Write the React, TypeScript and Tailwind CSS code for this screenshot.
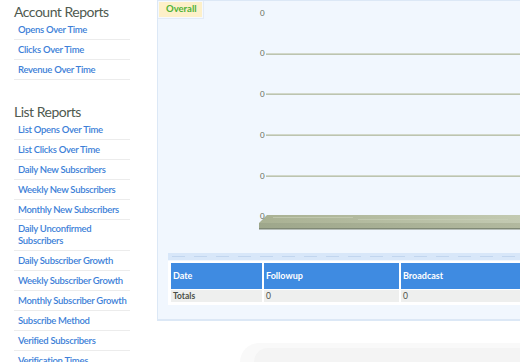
import React from "react";

const account = ["Opens Over Time", "Clicks Over Time", "Revenue Over Time"];
const list = [
  "List Opens Over Time",
  "List Clicks Over Time",
  "Daily New Subscribers",
  "Weekly New Subscribers",
  "Monthly New Subscribers",
  "Daily Unconfirmed Subscribers",
  "Daily Subscriber Growth",
  "Weekly Subscriber Growth",
  "Monthly Subscriber Growth",
  "Subscribe Method",
  "Verified Subscribers",
  "Verification Times",
];

function LinkItem({ label }: { label: string }) {
  const two = label === "Daily Unconfirmed Subscribers";
  return (
    <li
      className={
        two
          ? "border-b border-[#ececec] pl-[4px] pt-[3px] pb-[3px] text-[9.5px] font-semibold leading-[12px] tracking-[-0.3px] text-[#3d7fd8]"
          : "h-[20px] border-b border-[#ececec] pl-[4px] flex items-center text-[9.5px] font-semibold leading-[12px] tracking-[-0.3px] text-[#3d7fd8] whitespace-nowrap"
      }
    >
      {two ? (
        <a className="block">
          Daily Unconfirmed
          <br />
          Subscribers
        </a>
      ) : (
        <a>{label}</a>
      )}
    </li>
  );
}

function Chart() {
  const labels = [12, 52, 93, 134, 175, 215];
  const lines = [53, 93, 134, 175];
  return (
    <svg width="363" height="252" className="block">
      <defs>
        <linearGradient id="top" x1="0" x2="1" y1="0" y2="0">
          <stop offset="0" stopColor="#a9b193" />
          <stop offset="1" stopColor="#c3cab2" />
        </linearGradient>
        <linearGradient id="front" x1="0" x2="1" y1="0" y2="0">
          <stop offset="0" stopColor="#9ea78b" />
          <stop offset="1" stopColor="#b2b99f" />
        </linearGradient>
      </defs>
      {lines.map((y) => (
        <g key={y}>
          <rect x="108" y={y - 1} width="255" height="1" fill="#d2d8ca" />
          <rect x="108" y={y} width="255" height="1" fill="#bcc4b0" />
        </g>
      ))}
      <polygon points="101,222 109,214 363,214 363,222" fill="url(#top)" />
      <rect x="115" y="216" width="80" height="1" fill="#c7ceb7" opacity="0.7" />
      <rect x="200" y="218" width="150" height="1" fill="#c9d0ba" opacity="0.6" />
      <rect x="101" y="222" width="262" height="5" fill="url(#front)" />
      <rect x="101" y="227" width="262" height="1.5" fill="#7f8875" />
      {labels.map((y) => (
        <text
          key={y}
          x="102"
          y={y + 3}
          fontSize="8"
          fill="#626a5a"
          fontFamily="Lato, sans-serif"
        >
          0
        </text>
      ))}
    </svg>
  );
}

export default function App() {
  return (
    <div className="w-[520px] h-[362px] overflow-hidden bg-white flex" style={{ fontFamily: "Lato, sans-serif" }}>
      <aside className="w-[157px] shrink-0 pt-[3px] pl-[14px]">
        <h2 className="text-[14px] leading-[17px] tracking-[-0.5px] text-[#505a50]">Account Reports</h2>
        <ul className="w-[116px]">
          {account.map((l) => (
            <LinkItem key={l} label={l} />
          ))}
        </ul>
        <h2 className="mt-[23px] text-[14px] leading-[17px] tracking-[-0.5px] text-[#505a50]">List Reports</h2>
        <ul className="w-[116px]">
          {list.map((l) => (
            <LinkItem key={l} label={l} />
          ))}
        </ul>
      </aside>
      <main className="flex-1 flex flex-col min-w-0">
        <section className="relative h-[321px] bg-[#f1f7fe] border-l border-t border-b-2 border-[#dce8f6] overflow-hidden">
          <div className="absolute left-0 top-0 w-[46px] h-[18px] border-r border-b border-[#e3ebf6] bg-[#f6f9fd] p-px">
            <div className="h-full bg-[#fdf0c9] flex items-center pl-[7px] text-[9.5px] font-bold text-[#4fb237]">
              Overall
            </div>
          </div>
          <Chart />
          <div className="ml-[10px] h-[7px] bg-[#d8e7f9] flex items-center gap-[9px] pl-[4px]">
            {Array.from({ length: 16 }).map((_, i) => (
              <span key={i} className="w-[13px] h-px bg-[#c2d6ef]" />
            ))}
          </div>
          <div className="ml-[10px] mt-px bg-white pt-[2px] pl-[3px] pb-[3px] w-[400px]">
            <div className="flex gap-[2px] h-[26px] text-white text-[9px] font-bold">
              <div className="w-[91px] bg-[#3f8be1] flex items-center pl-[2px]">Date</div>
              <div className="w-[135px] bg-[#3f8be1] flex items-center pl-[2px]">Followup</div>
              <div className="w-[150px] bg-[#3f8be1] flex items-center pl-[2px]">Broadcast</div>
            </div>
            <div className="flex gap-[2px] h-[12px] mt-px text-[8.5px] text-[#4a4f48]">
              <div className="w-[91px] bg-[#eeefee] flex items-center pl-[2px] font-bold">Totals</div>
              <div className="w-[135px] bg-[#eeefee] flex items-center pl-[2px]">0</div>
              <div className="w-[150px] bg-[#eeefee] flex items-center pl-[2px]">0</div>
            </div>
          </div>
        </section>
        <div className="mt-[22px] ml-[83px] h-[19px] rounded-tl-[40px] bg-[#f9f9f9] pt-[5px] pl-[14px]">
          <div className="h-full rounded-tl-[30px] bg-[#f4f4f4]" />
        </div>
      </main>
    </div>
  );
}
